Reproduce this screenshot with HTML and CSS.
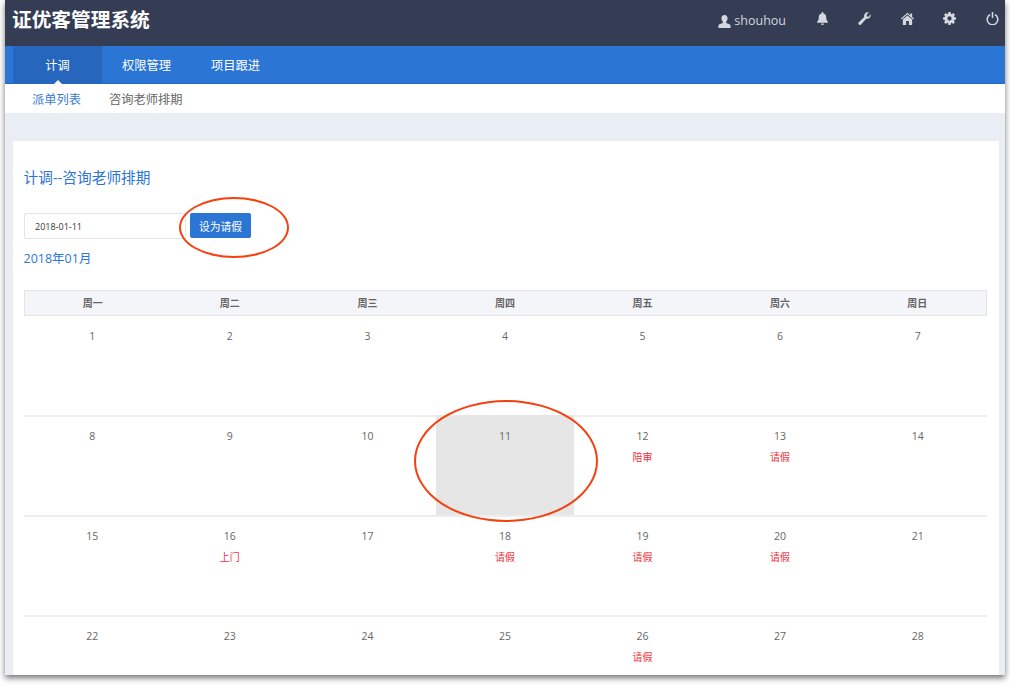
FILE: index.html
```html
<!DOCTYPE html>
<html lang="zh-CN">
<head>
    <meta charset="UTF-8">
    <title>证优客管理系统</title>
    <link rel="stylesheet" href="styles.css">
</head>
<body>
    <div class="window">
        <header class="topbar">
            <div class="brand">证优客管理系统</div>
            <div class="tools">
                <span class="user">
                    <svg class="icon-user" viewBox="0 0 14 14"><path d="M7 0c2.1 0 3.3 1.5 3.3 3.6 0 1.5-.6 3-1.5 3.8v1.200c1.600.6 4.700 1.300 4.700 3V14H.5v-2.400c0-1.700 3.100-2.400 4.700-3V7.400C4.300 6.600 3.700 5.100 3.700 3.600 3.700 1.500 4.900 0 7 0z"/></svg>
                    shouhou
                </span>
                <svg class="tool" viewBox="0 0 14 14"><path d="M7 0c.6 0 1 .4 1 1v.6c2 .5 3 2 3 4.100 0 2.500.6 3.500 1.800 4.800v1H1.200v-1C2.400 9.200 3 8.200 3 5.700c0-2.100 1-3.600 3-4.100V1c0-.6.400-1 1-1zM5.500 12.300h3C8.400 13.300 7.800 14 7 14s-1.400-.7-1.500-1.700z"/></svg>
                <svg class="tool" viewBox="0 0 14 14"><path d="M13.400 2.300c.5 1.400.2 3-.9 4-1 1-2.400 1.300-3.700.9L3.300 13.400c-.7.700-1.700.7-2.400.1-.7-.7-.7-1.800 0-2.500L6.700 5.300c-.4-1.300-.1-2.800.9-3.800S10.200.1 11.600.6L9.300 3l.4 1.800 1.700.4z"/></svg>
                <svg class="tool" viewBox="0 0 14 14"><path d="M7 .8l3 2.700V1.700h2v3.600l2 1.800-.8.9L7 2.500.8 8 0 7.100zM2 8.200l5-4.400 5 4.400V14H8.500V9.800h-3V14H2z"/></svg>
                <svg class="tool" viewBox="0 0 14 14"><path fill-rule="evenodd" d="M5.800 0h2.400l.3 1.900 1 .4L11.100 1.200l1.700 1.700-1.100 1.600.4 1 1.900.3v2.400l-1.900.3-.4 1 1.100 1.600-1.700 1.700-1.600-1.100-1 .4-.3 1.900H5.800l-.3-1.900-1-.4-1.600 1.100-1.700-1.700 1.100-1.600-.4-1L0 8.200V5.800l1.900-.3.400-1-1.100-1.600 1.700-1.700 1.600 1.100 1-.4zM7 4.700a2.300 2.300 0 1 0 0 4.600 2.300 2.300 0 0 0 0-4.600z"/></svg>
                <svg class="tool" viewBox="0 0 14 14"><path d="M6.200 0h1.600v6.500H6.200zM4.500 2v1.800a4.900 4.900 0 1 0 5 0V2a6.500 6.500 0 1 1-5 0z"/></svg>
            </div>
        </header>
        <nav class="mainnav">
            <a class="mainnav-item active">计调</a>
            <a class="mainnav-item">权限管理</a>
            <a class="mainnav-item">项目跟进</a>
        </nav>
        <div class="subnav">
            <a class="subnav-item current">派单列表</a>
            <a class="subnav-item">咨询老师排期</a>
        </div>
        <main class="content">
            <section class="panel">
                <h2 class="panel-title">计调--咨询老师排期</h2>
                <div class="toolbar">
                    <input class="date-input" type="text" value="2018-01-11">
                    <button class="btn-primary">设为请假</button>
                </div>
                <h3 class="month">2018年01月</h3>
                <table class="calendar">
                    <thead>
                        <tr><th>周一</th><th>周二</th><th>周三</th><th>周四</th><th>周五</th><th>周六</th><th>周日</th></tr>
                    </thead>
                    <tbody>
                        <tr><td>1</td><td>2</td><td>3</td><td>4</td><td>5</td><td>6</td><td>7</td></tr>
                        <tr>
                            <td>8</td><td>9</td><td>10</td><td class="selected">11</td>
                            <td>12<span class="tag">陪审</span></td>
                            <td>13<span class="tag">请假</span></td>
                            <td>14</td>
                        </tr>
                        <tr>
                            <td>15</td>
                            <td>16<span class="tag">上门</span></td>
                            <td>17</td>
                            <td>18<span class="tag">请假</span></td>
                            <td>19<span class="tag">请假</span></td>
                            <td>20<span class="tag">请假</span></td>
                            <td>21</td>
                        </tr>
                        <tr>
                            <td>22</td><td>23</td><td>24</td><td>25</td>
                            <td>26<span class="tag">请假</span></td>
                            <td>27</td><td>28</td>
                        </tr>
                    </tbody>
                </table>
            </section>
        </main>
        <div class="mark mark-btn"></div>
        <div class="mark mark-cell"></div>
    </div>
</body>
</html>
```

FILE: styles.css
```css
* {
    box-sizing: border-box;
}
html, body {
    height: 100%;
}
body {
    margin: 0;
    background: #fff;
    font-family: "Open Sans", "Noto Sans CJK SC", sans-serif;
    overflow: hidden;
}
.window {
    position: relative;
    width: 1000px;
    height: 675px;
    margin-left: 5px;
    background: #e9edf4;
    box-shadow: 0 3px 6px rgba(0, 0, 0, 0.55);
    display: flex;
    flex-direction: column;
}
.topbar {
    height: 46px;
    flex: none;
    background: #343d54;
    color: #fff;
    display: flex;
    justify-content: space-between;
    padding: 0 6.5px 0 7px;
}
.brand {
    font-size: 19.7px;
    font-weight: 700;
    line-height: 40px;
}
.tools {
    display: flex;
    align-items: flex-start;
    gap: 29.5px;
    padding-top: 12px;
    color: #d5d8df;
}
.user {
    display: flex;
    align-items: center;
    gap: 3px;
    font-size: 12.5px;
    line-height: 18px;
}
.icon-user {
    width: 13px;
    height: 13px;
    fill: #d5d8df;
}
.tool {
    width: 13px;
    height: 13px;
    fill: #d5d8df;
    flex: none;
}
.mainnav {
    height: 38px;
    flex: none;
    background: #2b75d4;
    border-bottom: 1px solid #2469c6;
    padding-left: 8px;
    display: flex;
}
.mainnav-item {
    position: relative;
    color: #fff;
    font-size: 12.25px;
    line-height: 40px;
    padding: 0 20px;
}
.mainnav-item.active {
    width: 89px;
    text-align: center;
    padding: 0;
    background: #2667bd;
}
.mainnav-item.active::after {
    content: "";
    position: absolute;
    left: 50%;
    bottom: -1px;
    margin-left: -4px;
    border: 4px solid transparent;
    border-top: 0;
    border-bottom-color: #fff;
}
.subnav {
    height: 29px;
    flex: none;
    background: #fff;
    display: flex;
    gap: 28px;
    padding-left: 27px;
    font-size: 12.25px;
    line-height: 31px;
    color: #666;
}
.subnav-item.current {
    color: #3a7bd0;
}
.content {
    flex: 1;
    padding: 28px 6px 0 8px;
    min-height: 0;
}
.panel {
    height: 100%;
    background: #fff;
    padding: 0 11px 0 10.5px;
    overflow: hidden;
}
.panel-title {
    margin: 25px 0 0;
    font-size: 14.7px;
    font-weight: 400;
    line-height: 22px;
    color: #2b75d4;
}
.toolbar {
    display: flex;
    gap: 4.5px;
    margin-top: 25px;
}
.date-input {
    width: 162px;
    height: 26px;
    border: 1px solid #e6e6e6;
    border-radius: 2px;
    padding: 0 10.5px;
    font-family: inherit;
    font-size: 9px;
    color: #333;
    outline: none;
}
.btn-primary {
    width: 61px;
    height: 25px;
    border: 0;
    border-radius: 2px;
    background: #2b75d4;
    color: #fff;
    font-family: inherit;
    font-size: 10.8px;
    padding: 0;
}
.month {
    margin: 10px 0 0;
    font-size: 12.5px;
    font-weight: 400;
    line-height: 20px;
    color: #2b75d4;
}
.calendar {
    width: 963px;
    margin-top: 21px;
    border-collapse: separate;
    border-spacing: 0;
    table-layout: fixed;
    font-size: 10.5px;
}
.calendar th {
    height: 26px;
    background: #f4f5f9;
    border: 1px solid #e2e4e8;
    border-width: 1px 0;
    color: #666;
    font-weight: 600;
    font-size: 10px;
    padding: 0 0 2px;
}
.calendar th:first-child {
    border-left: 1px solid #e2e4e8;
}
.calendar th:last-child {
    border-right: 1px solid #e2e4e8;
}
.calendar td {
    height: 100px;
    padding: 12px 0 0;
    vertical-align: top;
    text-align: center;
    color: #666;
    line-height: 14px;
    border-top: 2px solid #eee;
}
.calendar tbody tr:first-child td {
    height: 99px;
    padding-top: 13px;
    border-top: 0;
}
.calendar td.selected {
    background: #e6e6e6;
    border-top-color: #e6e6e6;
}
.tag {
    display: block;
    margin-top: 7px;
    color: #ef3340;
    font-size: 10px;
}
.mark {
    position: absolute;
    border: 2px solid #f5400f;
    border-radius: 50%;
}
.mark-btn {
    left: 174px;
    top: 197px;
    width: 110px;
    height: 61px;
}
.mark-cell {
    left: 409px;
    top: 400px;
    width: 184px;
    height: 122px;
}
```
